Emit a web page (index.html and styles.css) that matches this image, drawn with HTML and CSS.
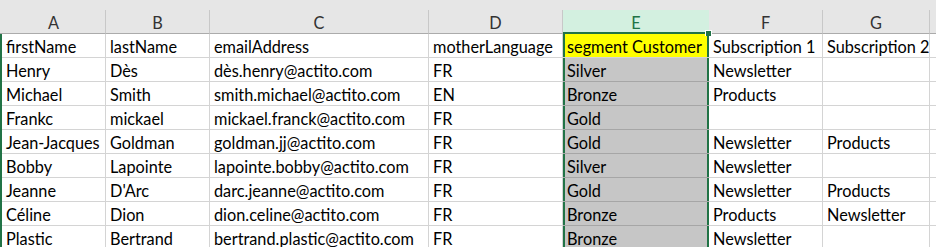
FILE: index.html
```html
<!DOCTYPE html>
<html>
<head>
<meta charset="utf-8">
<link rel="stylesheet" href="styles.css">
</head>
<body>
<div class="sheet">
  <div class="band"></div>
  <div class="grid">
    <div class="hd corner"></div>
    <div class="hd">A</div>
    <div class="hd">B</div>
    <div class="hd">C</div>
    <div class="hd">D</div>
    <div class="hd sel">E<span class="handle"></span></div>
    <div class="hd">F</div>
    <div class="hd">G</div>
    <div class="hd rest"></div>

    <div class="rh"></div><div class="c">firstName</div><div class="c">lastName</div><div class="c">emailAddress</div><div class="c">motherLanguage</div><div class="c e active">segment Customer</div><div class="c">Subscription 1</div><div class="c">Subscription 2</div><div class="c rest"></div>
    <div class="rh"></div><div class="c">Henry</div><div class="c">Dès</div><div class="c">dès.henry@actito.com</div><div class="c">FR</div><div class="c e">Silver</div><div class="c">Newsletter</div><div class="c"></div><div class="c rest"></div>
    <div class="rh"></div><div class="c">Michael</div><div class="c">Smith</div><div class="c">smith.michael@actito.com</div><div class="c">EN</div><div class="c e">Bronze</div><div class="c">Products</div><div class="c"></div><div class="c rest"></div>
    <div class="rh"></div><div class="c">Frankc</div><div class="c">mickael</div><div class="c">mickael.franck@actito.com</div><div class="c">FR</div><div class="c e">Gold</div><div class="c"></div><div class="c"></div><div class="c rest"></div>
    <div class="rh"></div><div class="c">Jean-Jacques</div><div class="c">Goldman</div><div class="c">goldman.jj@actito.com</div><div class="c">FR</div><div class="c e">Gold</div><div class="c">Newsletter</div><div class="c">Products</div><div class="c rest"></div>
    <div class="rh"></div><div class="c">Bobby</div><div class="c">Lapointe</div><div class="c">lapointe.bobby@actito.com</div><div class="c">FR</div><div class="c e">Silver</div><div class="c">Newsletter</div><div class="c"></div><div class="c rest"></div>
    <div class="rh"></div><div class="c">Jeanne</div><div class="c">D'Arc</div><div class="c">darc.jeanne@actito.com</div><div class="c">FR</div><div class="c e">Gold</div><div class="c">Newsletter</div><div class="c">Products</div><div class="c rest"></div>
    <div class="rh"></div><div class="c">Céline</div><div class="c">Dion</div><div class="c">dion.celine@actito.com</div><div class="c">FR</div><div class="c e">Bronze</div><div class="c">Products</div><div class="c">Newsletter</div><div class="c rest"></div>
    <div class="rh"></div><div class="c">Plastic</div><div class="c">Bertrand</div><div class="c">bertrand.plastic@actito.com</div><div class="c">FR</div><div class="c e">Bronze</div><div class="c">Newsletter</div><div class="c"></div><div class="c rest"></div>
  </div>
</div>
</body>
</html>
```

FILE: styles.css
```css
html, body {
  margin: 0;
  padding: 0;
  background: #ffffff;
  overflow: hidden;
}

.sheet {
  width: 936px;
  height: 247px;
  overflow: hidden;
  font-family: Lato, "Liberation Sans", Arial, sans-serif;
  font-size: 16.3px;
  color: #000000;
}

.band {
  height: 10px;
  background: #e6e6e6;
}

.grid {
  display: grid;
  grid-template-columns: 2px 104px 104px 219px 134px 146px 114px 107px 1fr;
  grid-auto-rows: 24px;
  grid-template-rows: 24px;
}

.hd {
  background: #e6e6e6;
  border-right: 1px solid #c8c8c8;
  border-bottom: 1px solid #ababab;
  color: #333333;
  text-align: center;
  line-height: 22px;
  padding-top: 2px;
  box-sizing: border-box;
  position: relative;
}

.hd.corner {
  border-right: none;
}

.hd.rest {
  border-right: none;
}

.hd.sel {
  background: #d3f0e0;
  color: #217346;
  border-bottom: 2px solid #217346;
  border-right: none;
  line-height: 21px;
}

.handle {
  position: absolute;
  right: -3px;
  bottom: -4px;
  width: 5px;
  height: 5px;
  background: #217346;
  border: 1px solid #ffffff;
  border-bottom: none;
  z-index: 2;
}

.rh {
  background: #217346;
}

.c {
  border-right: 1px solid #d4d4d4;
  border-bottom: 1px solid #d4d4d4;
  padding: 2px 0 0 4px;
  line-height: 22px;
  white-space: nowrap;
  overflow: hidden;
  box-sizing: border-box;
}

.c.rest {
  border-right: none;
}

.c.e {
  background: #c6c6c6;
  border-bottom: 1px solid #a6a6a6;
  border-right: none;
  box-shadow: inset 2px 0 0 #217346, inset -2px 0 0 #217346;
}

.c.e.active {
  background: #ffff00;
  border-bottom: 1px solid #d4d4d4;
}
```
